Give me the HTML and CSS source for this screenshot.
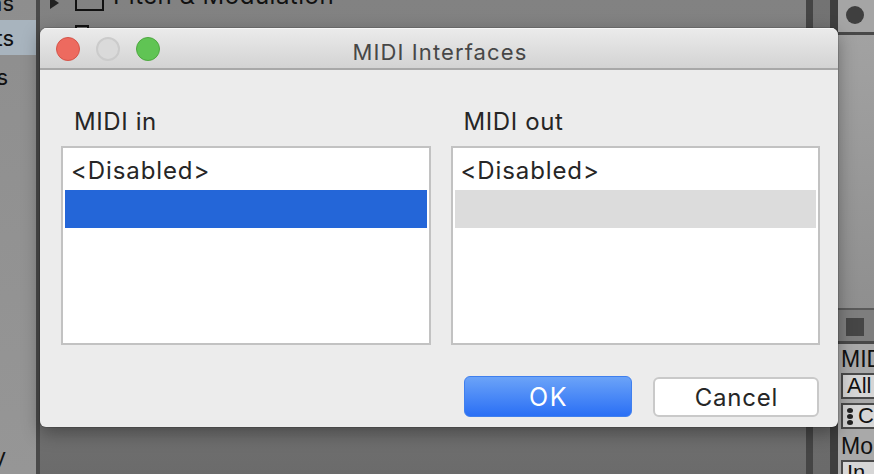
FILE: index.html
```html
<!DOCTYPE html>
<html>
<head>
<meta charset="utf-8">
<link rel="stylesheet" href="styles.css">
</head>
<body>
<div class="desktop">
  <aside class="sidebar">
    <div class="side-row r0"><span>Drums</span></div>
    <div class="side-row sel"><span>MIDI Effects</span></div>
    <div class="side-row"><span>Plug-ins</span></div>
    <div class="side-spacer"></div>
    <div class="side-row last"><span>Library</span></div>
  </aside>
  <div class="vdiv"></div>
  <main class="main">
    <div class="tree-row">
      <span class="tri"></span>
      <span class="folder"></span>
      <span class="tree-text">Pitch &amp; Modulation</span>
    </div>
    <div class="tree-row2">
      <span class="folder small"></span>
    </div>
  </main>
  <div class="strip s1"></div>
  <div class="strip s2"></div>
  <div class="strip s3"></div>
  <aside class="rpanel">
    <div class="rp-top"><span class="dot"></span></div>
    <div class="rp-line"></div>
    <div class="rp-mid"></div>
    <div class="rp-line thin"></div>
    <div class="rp-sq"><span class="sq"></span></div>
    <div class="rp-line"></div>
    <div class="rp-low">
      <div class="rp-lab">MIDI</div>
      <div class="rp-box">All</div>
      <div class="rp-box dots"><span class="vdots"><i></i><i></i><i></i></span>Ch</div>
      <div class="rp-lab">Mon</div>
      <div class="rp-box">In</div>
    </div>
  </aside>

  <div class="dialog">
    <div class="titlebar">
      <div class="lights">
        <span class="light red"></span>
        <span class="light grey"></span>
        <span class="light green"></span>
      </div>
      <div class="title">MIDI Interfaces</div>
    </div>
    <div class="dbody">
      <div class="cols">
        <div class="col">
          <div class="label">MIDI in</div>
          <div class="list">
            <div class="item">&lt;Disabled&gt;</div>
            <div class="item selected"></div>
          </div>
        </div>
        <div class="col">
          <div class="label">MIDI out</div>
          <div class="list">
            <div class="item">&lt;Disabled&gt;</div>
            <div class="item inactive"></div>
          </div>
        </div>
      </div>
      <div class="buttons">
        <button class="btn ok">OK</button>
        <button class="btn cancel">Cancel</button>
      </div>
    </div>
  </div>
</div>
</body>
</html>
```

FILE: styles.css
```css
html, body {
  margin: 0;
  padding: 0;
}
body {
  width: 874px;
  height: 474px;
  overflow: hidden;
  font-family: Inter, "Liberation Sans", Arial, sans-serif;
}
.desktop {
  position: relative;
  display: flex;
  width: 874px;
  height: 474px;
  overflow: hidden;
  background: #7a7a7a;
}

/* left browser sidebar */
.sidebar {
  width: 36px;
  flex: none;
  display: flex;
  flex-direction: column;
  background: linear-gradient(#8e8e8e, #969696);
  overflow: hidden;
}
.side-row {
  height: 35px;
  flex: none;
  display: flex;
  justify-content: flex-end;
  align-items: center;
  padding-right: 22px;
  white-space: nowrap;
  font-size: 22px;
  color: #111;
}
.side-row.r0 {
  margin-top: -15px;
}
.side-row.sel {
  background: #a8b4be;
}
.side-row:nth-child(3) {
  padding-right: 28px;
  margin-top: 4px;
}
.side-spacer {
  flex: 1;
}
.side-row.last {
  margin-bottom: 1px;
  padding-right: 30px;
}
.vdiv {
  width: 4px;
  flex: none;
  background: #4a4a4a;
}

/* main area */
.main {
  width: 766px;
  flex: none;
  background: linear-gradient(#828282 0%, #7c7c7c 60%, #6b6b6b 100%);
  overflow: hidden;
}
.tree-row {
  display: flex;
  align-items: flex-end;
  height: 11px;
  padding-left: 10px;
}
.tri {
  display: block;
  flex: none;
  width: 0;
  height: 0;
  border-left: 9px solid #222;
  border-top: 6px solid transparent;
  border-bottom: 6px solid transparent;
  margin-bottom: 2px;
}
.folder {
  display: block;
  width: 25px;
  height: 22px;
  border: 2px solid #111;
  margin-left: 16px;
  flex: none;
}
.tree-text {
  display: block;
  flex: none;
  margin-left: 9px;
  font-size: 24px;
  line-height: 23px;
  color: #111;
  margin-bottom: 4px;
  white-space: nowrap;
  letter-spacing: 0.5px;
}
.tree-row2 {
  height: 20px;
  padding-top: 14px;
}
.folder.small {
  width: 10px;
  height: 20px;
  margin-left: 35px;
}

/* right strips */
.strip {
  flex: none;
}
.s1 {
  width: 7px;
  background: #454545;
}
.s2 {
  width: 17px;
  background: linear-gradient(#737373, #6a6a6a);
}
.s3 {
  width: 8px;
  background: #3e3e3e;
}

/* right panel */
.rpanel {
  width: 36px;
  flex: none;
  display: flex;
  flex-direction: column;
  background: #a5a5a5;
  overflow: hidden;
}
.rp-top {
  height: 32px;
  flex: none;
  position: relative;
}
.dot {
  position: absolute;
  left: 8px;
  top: 6px;
  width: 18px;
  height: 18px;
  border-radius: 50%;
  background: #3f3f3f;
}
.rp-line {
  height: 3px;
  flex: none;
  background: #484848;
}
.rp-line.thin {
  height: 2px;
  background: #5a5a5a;
}
.rp-mid {
  height: 273px;
  flex: none;
  background: linear-gradient(#a2a2a2, #8f8f8f);
}
.rp-sq {
  height: 31px;
  flex: none;
  background: #7e7e7e;
  padding-top: 8px;
  box-sizing: border-box;
}
.sq {
  display: block;
  width: 18px;
  height: 18px;
  margin-left: 8px;
  background: #464646;
}
.rp-low {
  flex: 1;
  background: #a9a9a9;
  padding-left: 3px;
  white-space: nowrap;
}
.rp-lab {
  font-family: "Liberation Sans", Arial, sans-serif;
  font-size: 23px;
  line-height: 26px;
  color: #111;
  height: 27px;
  margin-top: 2px;
}
.rp-box {
  height: 22px;
  border: 2px solid #4a4a4a;
  border-right: none;
  background: #d6d6d6;
  font-family: "Liberation Sans", Arial, sans-serif;
  font-size: 22px;
  line-height: 24px;
  color: #111;
  padding-left: 4px;
  margin-bottom: 4px;
  overflow: hidden;
  display: flex;
  align-items: center;
}
.vdots {
  display: inline-flex;
  flex-direction: column;
  gap: 1px;
  margin-right: 5px;
}
.vdots i {
  display: block;
  width: 6px;
  height: 5px;
  border-radius: 50%;
  background: #222;
}

/* dialog window */
.dialog {
  position: absolute;
  left: 40px;
  top: 28px;
  width: 798px;
  height: 399px;
  border-radius: 7px 7px 6px 6px;
  overflow: hidden;
  background: #ececec;
  box-shadow: 0 0 0 1px rgba(0, 0, 0, 0.12), 0 6px 18px rgba(0, 0, 0, 0.35);
  display: flex;
  flex-direction: column;
}
.titlebar {
  height: 40px;
  flex: none;
  position: relative;
  display: flex;
  align-items: center;
  justify-content: center;
  background: linear-gradient(#ebebeb, #d3d3d3);
  border-bottom: 2px solid #a8a8a8;
  box-shadow: inset 0 1px 0 #f6f6f6;
}
.lights {
  position: absolute;
  left: 16px;
  top: 9px;
  display: flex;
  gap: 16px;
}
.light {
  width: 24px;
  height: 24px;
  border-radius: 50%;
  box-sizing: border-box;
}
.light.red {
  background: #ed6a5f;
  border: 1px solid #d55449;
}
.light.grey {
  background: #dadada;
  border: 2px solid #cbcbcb;
}
.light.green {
  background: #60c454;
  border: 1px solid #4ea840;
}
.title {
  font-size: 22px;
  letter-spacing: 1.1px;
  color: #474747;
  margin-top: 8px;
  padding-left: 2px;
}
.dbody {
  flex: 1;
  display: flex;
  flex-direction: column;
  padding: 38px 18px 10px 21px;
}
.cols {
  display: flex;
  gap: 20px;
}
.col {
  flex: 1;
  display: flex;
  flex-direction: column;
}
.label {
  font-size: 24px;
  line-height: 28px;
  letter-spacing: 0.6px;
  color: #262626;
  padding-left: 13px;
  margin-bottom: 10px;
}
.list {
  height: 199px;
  box-sizing: border-box;
  border: 2px solid #c2c2c2;
  background: #fff;
  padding: 4px 2px;
}
.item {
  height: 38px;
  line-height: 38px;
  font-size: 24px;
  letter-spacing: 0.9px;
  color: #262626;
  padding-left: 6px;
}
.item.selected {
  background: #2466d8;
}
.item.inactive {
  background: #dcdcdc;
}
.buttons {
  margin-top: auto;
  display: flex;
  justify-content: flex-end;
  gap: 21px;
  padding-right: 1px;
}
.btn {
  font-family: Inter, "Liberation Sans", Arial, sans-serif;
  font-size: 24px;
  letter-spacing: 0.8px;
  border-radius: 6px;
  box-sizing: border-box;
  padding: 0 0 0 1px;
  margin: 0;
}
.btn.ok {
  width: 168px;
  height: 41px;
  color: #fff;
  border: 1px solid #3f7fee;
  background: linear-gradient(#6ba3f8, #2a6ff5);
  letter-spacing: 1.6px;
  font-size: 25px;
}
.btn.cancel {
  width: 166px;
  height: 40px;
  margin-top: 1px;
  color: #262626;
  background: #fff;
  border: 2px solid #c9c9c9;
}
```
